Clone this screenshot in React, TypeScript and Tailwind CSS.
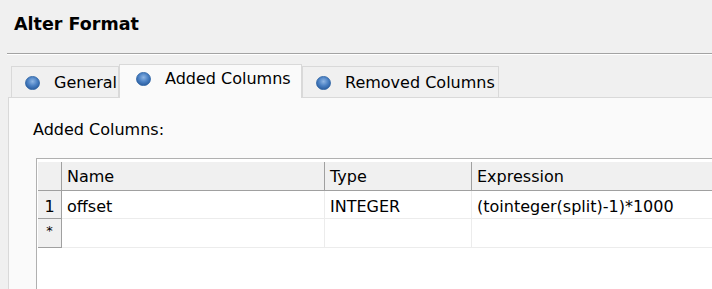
import React from "react";

function Ball() {
  return (
    <svg width="15" height="14" viewBox="0 0 15 14" className="shrink-0">
      <defs>
        <radialGradient id="ballGrad" cx="0.5" cy="0.38" r="0.62">
          <stop offset="0" stopColor="#8fb6e4" />
          <stop offset="0.55" stopColor="#4a80c3" />
          <stop offset="1" stopColor="#2a5d9e" />
        </radialGradient>
      </defs>
      <ellipse cx="7.5" cy="7" rx="7" ry="6.6" fill="url(#ballGrad)" stroke="#2f64a5" strokeWidth="0.8" />
    </svg>
  );
}

function Tab({ label, active, width }: { label: string; active?: boolean; width: string }) {
  if (active) {
    return (
      <div className={`${width} relative z-10 -mb-px flex h-[34px] items-start gap-[14px] border border-b-0 border-[#d9d9d9] bg-[#fafafa] pl-[16px] pt-[4px]`}>
        <div className="flex h-[20px] items-center"><Ball /></div>
        <span className="leading-[20px]">{label}</span>
      </div>
    );
  }
  return (
    <div className={`${width} flex h-[31px] items-center gap-[14px] border border-b-0 border-[#d9d9d9] bg-[#f0f0f0] pl-[13px] pt-px`}>
      <Ball />
      <span className="leading-[20px]">{label}</span>
    </div>
  );
}

const rows = [
  { n: "1", name: "offset", type: "INTEGER", expr: "(tointeger(split)-1)*1000" },
];

export default function App() {
  return (
    <div className="flex h-[289px] w-[712px] flex-col overflow-hidden bg-[#f0f0f0] font-['DejaVu_Sans',sans-serif] text-[16px] text-black">
      <div className="pl-[14px] pt-[14px] text-[17.5px] font-bold leading-[20px]">Alter Format</div>

      <div className="ml-[7px] mt-[19px] border-t border-b border-t-[#a3a3a3] border-b-white" />

      <div className="mt-[9px] flex items-end pl-[11px]">
        <Tab label="General" width="w-[108px]" />
        <Tab label="Added Columns" width="w-[183px]" active />
        <Tab label="Removed Columns" width="w-[197px]" />
      </div>

      <div className="ml-[8px] flex flex-1 flex-col border-l border-t border-[#d9d9d9] bg-[#fafafa]">
        <div className="ml-[24px] mt-[22px] leading-[20px]">Added Columns:</div>

        <div className="ml-[27px] mt-[18px] flex-1 border-l border-t border-[#b0b0b0] bg-white pl-px pt-[3px]">
          <div className="flex h-[29px] border-b border-[#a0a0a0] bg-[#f0f0f0]">
            <div className="w-[24px] border-r border-[#a0a0a0]" />
            <div className="w-[263px] border-r border-[#a0a0a0] pl-[5px] pt-[5px] leading-[20px]">Name</div>
            <div className="w-[147px] border-r border-[#a0a0a0] pl-[5px] pt-[5px] leading-[20px]">Type</div>
            <div className="flex-1 pl-[5px] pt-[5px] leading-[20px]">Expression</div>
          </div>

          {rows.map((r) => (
            <div key={r.n} className="flex h-[28px]">
              <div className="w-[24px] border-b border-r border-[#a0a0a0] bg-[#f0f0f0] pt-[6px] text-center leading-[20px]">{r.n}</div>
              <div className="w-[263px] border-b border-r border-[#ececec] pl-[5px] pt-[6px] leading-[20px]">{r.name}</div>
              <div className="w-[147px] border-b border-r border-[#ececec] pl-[5px] pt-[6px] leading-[20px]">{r.type}</div>
              <div className="flex-1 border-b border-[#ececec] pl-[5px] pt-[6px] leading-[20px]">{r.expr}</div>
            </div>
          ))}

          <div className="flex h-[29px]">
            <div className="w-[24px] border-b border-r border-[#a0a0a0] bg-[#f0f0f0] pt-[4px] text-center text-[13px] leading-[16px]">*</div>
            <div className="w-[263px] border-b border-r border-[#ececec]" />
            <div className="w-[147px] border-b border-r border-[#ececec]" />
            <div className="flex-1 border-b border-[#ececec]" />
          </div>
        </div>
      </div>
    </div>
  );
}
